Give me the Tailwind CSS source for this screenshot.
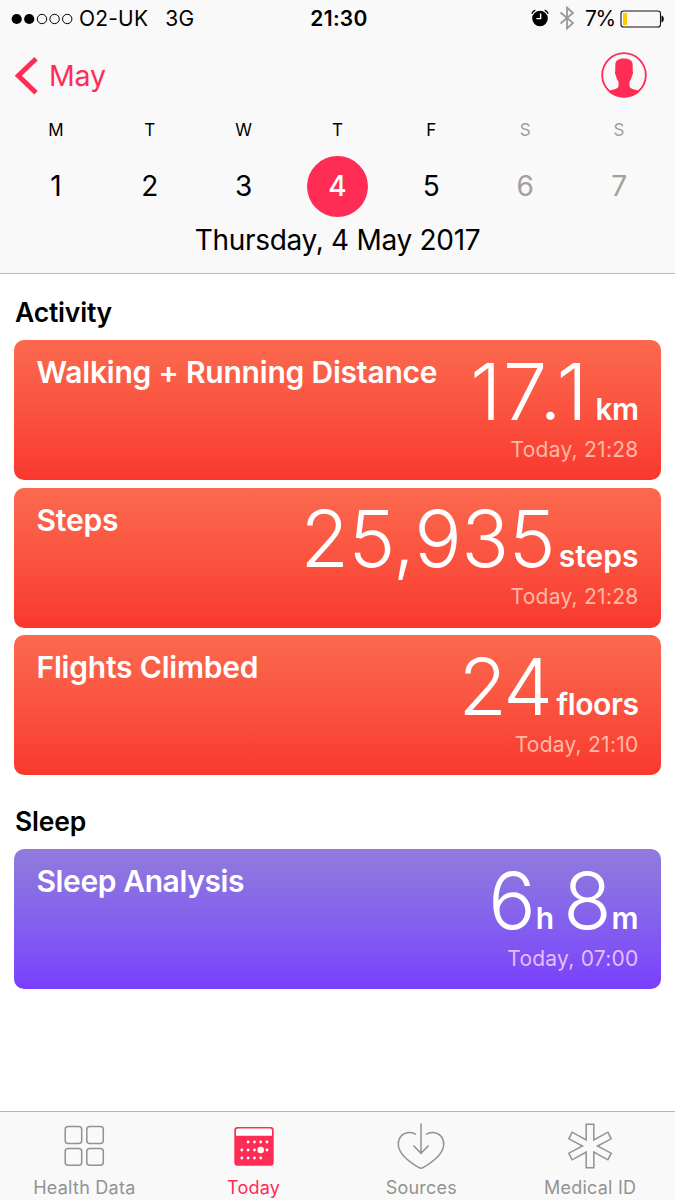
<!DOCTYPE html>
<html lang="en">
<head>
    <meta charset="UTF-8">
    <meta name="viewport" content="width=device-width, initial-scale=1.0">
    <title>Health - Today</title>
    <script src="https://cdn.jsdelivr.net/npm/@tailwindcss/browser@4"></script>
</head>
<body class="bg-white text-black font-['Inter',sans-serif]">
<div class="w-[675px] h-[1200px] flex flex-col overflow-hidden">

    <!-- Header -->
    <header class="h-[274px] bg-[#f9f9f9] border-b border-[#b9b9b9] shrink-0">
        <!-- Status bar -->
        <div class="h-[37px] grid grid-cols-3 items-center text-[21px] leading-[37px]">
            <div class="flex items-center pl-[11px] whitespace-nowrap">
                <svg class="w-[62px] h-[12px] shrink-0" viewBox="0 0 62 12">
                    <circle cx="5.7" cy="6" r="5.1"/>
                    <circle cx="18.2" cy="6" r="5.1"/>
                    <g fill="none" stroke="#000" stroke-width="1">
                        <circle cx="31" cy="6" r="4.7"/>
                        <circle cx="43.6" cy="6" r="4.7"/>
                        <circle cx="56.2" cy="6" r="4.7"/>
                    </g>
                </svg>
                <span class="ml-[6px] tracking-[0.2px]">O2-UK</span>
                <span class="ml-[17px] tracking-[0.2px]">3G</span>
            </div>
            <div class="text-center font-semibold pl-[3px] tracking-[0.3px]">21:30</div>
            <div class="flex items-center justify-end pr-[10px]">
                <svg class="w-[18px] h-[18px] mb-[2px]" viewBox="0 0 18 18">
                    <circle cx="9" cy="9.5" r="7.8"/>
                    <path d="M.8 4.6A7 7 0 0 1 4.3 1.2M17.2 4.6A7 7 0 0 0 13.7 1.2" fill="none" stroke="#000" stroke-width="1.4"/>
                    <path d="M9.6 4.6v5H5.4" fill="none" stroke="#fff" stroke-width="1.4"/>
                </svg>
                <svg class="w-[16px] h-[24px] ml-[10px] mb-[1px]" viewBox="0 0 16 24" fill="none" stroke="#999" stroke-width="1.8">
                    <path d="M1.5 6.500L14 17l-6 5.500v-21L14 7 1.500 17.500"/>
                </svg>
                <span class="ml-[10px] tracking-[-1.2px]">7%</span>
                <svg class="w-[45px] h-[18px] ml-[5px]" viewBox="0 0 45 18">
                    <rect x="1" y="1" width="39.5" height="16" rx="2.6" fill="none" stroke="#111" stroke-width="1.1"/>
                    <rect x="3" y="3" width="4" height="12" fill="#fc0"/>
                    <path d="M41.5 5.500c3 .8 3 6.200 0 7z"/>
                </svg>
            </div>
        </div>

        <!-- Nav -->
        <div class="h-[78px] flex items-center justify-between pl-[15px] pr-[28px] text-[#ff2d55]">
            <a class="flex items-center text-[28.5px]">
                <svg class="w-[24px] h-[38px]" viewBox="0 0 24 38" fill="none" stroke="currentColor" stroke-width="5">
                    <path d="M21 1.800L3.300 18.800l17.700 17"/>
                </svg>
                <span class="ml-[10px] tracking-[-0.2px]">May</span>
            </a>
            <svg class="w-[46px] h-[46px] mb-[3px]" viewBox="0 0 46 46">
                <circle cx="23" cy="23" r="21.8" fill="none" stroke="currentColor" stroke-width="1.8"/>
                <path fill="currentColor" d="M23 6.500c5.800 0 8.700 2.200 8.700 6.500v6c.6.500.4 3.200-.7 5-.5 2.300-1.500 4.300-2.500 5.500V34c.4 2.800 3.500 3 8.500 4.500l1.500 1.500C34 43.500 29 45.300 23 45.300S12 43.500 7.500 40L9 38.500c5-1.500 8.100-1.700 8.500-4.500v-4.500c-1-1.200-2-3.200-2.500-5.500-1.100-1.800-1.300-4.500-.7-5v-6c0-4.300 2.900-6.500 8.700-6.500z"/>
            </svg>
        </div>

        <!-- Week -->
        <div class="grid grid-cols-7 px-[9px] text-center text-[17px] leading-[30px]">
            <span>M</span>
            <span>T</span>
            <span>W</span>
            <span>T</span>
            <span>F</span>
            <span class="text-[#a0a0a0]">S</span>
            <span class="text-[#a0a0a0]">S</span>
        </div>
        <div class="mt-[10.5px] grid grid-cols-7 px-[9px] text-center text-[28px] leading-[61px]">
            <span>1</span>
            <span>2</span>
            <span>3</span>
            <span class="w-[61px] h-[61px] mx-auto rounded-full bg-[#ff2d55] text-white font-medium">4</span>
            <span>5</span>
            <span class="text-[#a0a0a0]">6</span>
            <span class="text-[#a0a0a0]">7</span>
        </div>
        <p class="text-center text-[28px] leading-[47px] tracking-[-0.3px]">Thursday, 4 May 2017</p>
    </header>

    <!-- Cards -->
    <main class="flex-1 pl-[14px] pr-[14.5px]">
        <h2 class="pt-[19px] pl-[1px] h-[66px] text-[26.5px] leading-[38px] font-semibold tracking-[-0.2px]">Activity</h2>
        <div class="flex flex-col gap-[7.5px]">
            <section class="h-[140px] rounded-[10px] bg-linear-to-b from-[#fb694f] to-[#f9372e] pl-[22.5px] pr-[22px] flex justify-between text-white">
                <h3 class="pt-[14px] text-[30px] leading-[36px] font-semibold tracking-[-0.2px] whitespace-nowrap">Walking + Running Distance</h3>
                <div class="pt-[10.5px] text-right whitespace-nowrap">
                    <p class="h-[80px] flex justify-end items-baseline leading-[80px]"><span class="text-[79px] font-light tracking-[1.8px]">17.1</span><span class="ml-[6px] text-[30px] font-semibold tracking-[-0.5px]">km</span></p>
                    <p class="mt-[6px] text-[21px] leading-[26px] tracking-[0.25px] text-[#ffb9a6]">Today, 21:28</p>
                </div>
            </section>
            <section class="h-[140px] rounded-[10px] bg-linear-to-b from-[#fb694f] to-[#f9372e] pl-[22.5px] pr-[22px] flex justify-between text-white">
                <h3 class="pt-[14px] text-[30px] leading-[36px] font-semibold tracking-[-0.2px] whitespace-nowrap">Steps</h3>
                <div class="pt-[10.5px] text-right whitespace-nowrap">
                    <p class="h-[80px] flex justify-end items-baseline leading-[80px]"><span class="text-[79px] font-light tracking-[-0.4px]">25,935</span><span class="ml-[3.5px] text-[30px] font-semibold">steps</span></p>
                    <p class="mt-[6px] text-[21px] leading-[26px] tracking-[0.25px] text-[#ffb9a6]">Today, 21:28</p>
                </div>
            </section>
            <section class="h-[140px] rounded-[10px] bg-linear-to-b from-[#fb694f] to-[#f9372e] pl-[22.5px] pr-[22px] flex justify-between text-white">
                <h3 class="pt-[14px] text-[30px] leading-[36px] font-semibold tracking-[-0.2px] whitespace-nowrap">Flights Climbed</h3>
                <div class="pt-[10.5px] text-right whitespace-nowrap">
                    <p class="h-[80px] flex justify-end items-baseline leading-[80px]"><span class="text-[79px] font-light tracking-[-2.5px]">24</span><span class="ml-[6px] text-[30px] font-semibold tracking-[-0.4px]">floors</span></p>
                    <p class="mt-[6px] text-[21px] leading-[26px] tracking-[0.25px] text-[#ffb9a6]">Today, 21:10</p>
                </div>
            </section>
        </div>

        <h2 class="pt-[27px] pl-[1px] h-[74px] text-[26.5px] leading-[38px] font-semibold tracking-[-0.2px]">Sleep</h2>
        <section class="h-[140px] rounded-[10px] bg-linear-to-b from-[#917bdb] to-[#7a3dfd] pl-[22.5px] pr-[22px] flex justify-between text-white">
            <h3 class="pt-[14px] text-[30px] leading-[36px] font-semibold tracking-[-0.4px] whitespace-nowrap">Sleep Analysis</h3>
            <div class="pt-[10.5px] text-right whitespace-nowrap">
                <p class="h-[80px] flex justify-end items-baseline leading-[80px]"><span class="text-[79px] font-light">6</span><span class="text-[30px] font-semibold">h</span><span class="ml-[9px] text-[79px] font-light">8</span><span class="text-[30px] font-semibold">m</span></p>
                <p class="mt-[6px] text-[21px] leading-[26px] tracking-[0.25px] text-[#e9bdfa]">Today, 07:00</p>
            </div>
        </section>
    </main>

    <!-- Tab bar -->
    <nav class="h-[89px] shrink-0 grid grid-cols-4 bg-[#f9f9f9] border-t border-[#b3b6b5] text-[18px] leading-[22px] tracking-[0.25px] text-[#929292]">
        <a class="flex flex-col items-center pt-[11px]">
            <svg class="w-[48px] h-[48px]" viewBox="0 0 48 48" fill="none" stroke="currentColor" stroke-width="1.5">
                <rect x="5.2" y="3.6" width="16.5" height="16.8" rx="3"/>
                <rect x="26.8" y="3.6" width="16.5" height="16.8" rx="3"/>
                <rect x="5.2" y="25.4" width="16.5" height="16.8" rx="3"/>
                <rect x="26.8" y="25.4" width="16.5" height="16.8" rx="3"/>
            </svg>
            <span class="mt-[6px]">Health Data</span>
        </a>
        <a class="flex flex-col items-center pt-[11px] text-[#ff2d55]">
            <svg class="w-[48px] h-[48px] ml-[1px]" viewBox="0 0 48 48">
                <rect x="4.3" y="4" width="39.4" height="38.8" rx="3" fill="currentColor"/>
                <path d="M6 12.800V7.500q0-2 2-2h32q2 0 2 2v5.300z" fill="#fff"/>
                <g fill="#fff">
                    <circle cx="18.1" cy="19" r="1.4"/><circle cx="24.4" cy="19" r="1.4"/><circle cx="30.7" cy="19" r="1.4"/><circle cx="37" cy="19" r="1.4"/>
                    <circle cx="11.8" cy="27" r="1.4"/><circle cx="18.1" cy="27" r="1.4"/><circle cx="24.4" cy="27" r="1.4"/><circle cx="30.7" cy="27" r="3.3"/><circle cx="37" cy="27" r="1.4"/>
                    <circle cx="11.8" cy="35" r="1.4"/><circle cx="18.1" cy="35" r="1.4"/><circle cx="24.4" cy="35" r="1.4"/><circle cx="30.7" cy="35" r="1.4"/>
                </g>
            </svg>
            <span class="mt-[6px] pl-[1px]">Today</span>
        </a>
        <a class="flex flex-col items-center pt-[11px] pr-[1px]">
            <svg class="w-[48px] h-[48px]" viewBox="0 0 48 48" fill="none" stroke="currentColor" stroke-width="1.5">
                <path d="M19 11.500C16.500 9.500 14 9.300 11.500 9.500 5.500 10 1.300 14.800 1.300 21c0 9.500 9.500 16.500 16.200 20.800 4.200 2.700 5.300 3.400 6.500 3.400s2.300-.7 6.500-3.400C37.200 37.500 46.700 30.500 46.700 21c0-6.200-4.200-11-10.200-11.500-2.500-.2-5 0-7.500 2"/>
                <path d="M24 .5v30M16.500 22.500l7.500 7.800 7.500-7.800"/>
            </svg>
            <span class="mt-[6px]">Sources</span>
        </a>
        <a class="flex flex-col items-center pt-[11px] pr-[1px]">
            <svg class="w-[48px] h-[48px]" viewBox="0 0 48 48" fill="none" stroke="currentColor" stroke-width="1.5">
                <path d="M20.200 1.200h7.600v15.700l14.100-7.700 3.300 6.600L31.500 23l13.700 7.200-3.300 6.600-14.100-7.700v15.700h-7.600V29.100L6.100 36.800l-3.300-6.600L16.500 23 2.800 15.800l3.300-6.600 14.100 7.700z"/>
            </svg>
            <span class="mt-[6px]">Medical ID</span>
        </a>
    </nav>
</div>
</body>
</html>
